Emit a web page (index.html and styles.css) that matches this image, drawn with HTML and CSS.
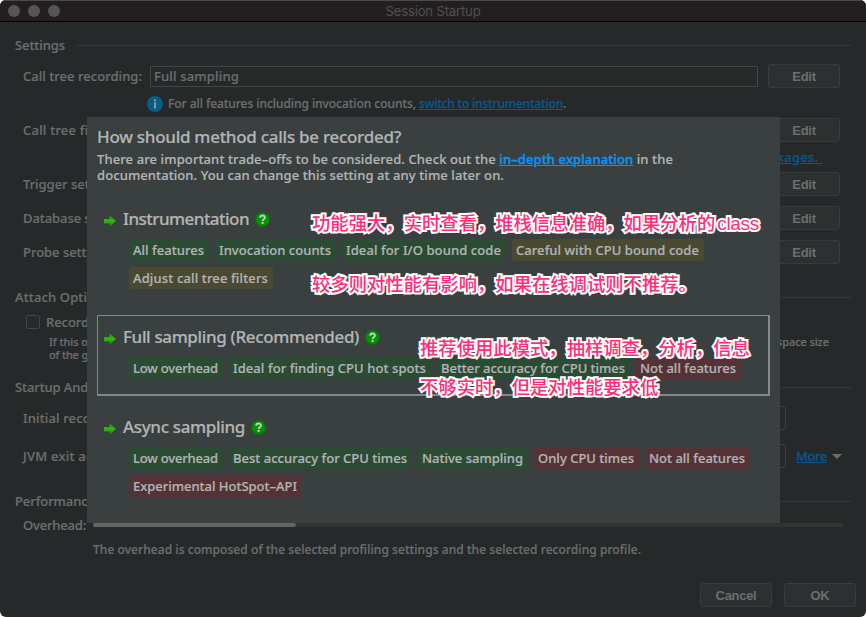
FILE: index.html
```
<!DOCTYPE html>
<html lang="en">
<head>
<meta charset="utf-8">
<title>Session Startup</title>
<link rel="stylesheet" href="styles.css">
</head>
<body>
<svg width="0" height="0" class="defs">
  <defs>
    <linearGradient id="ag" x1="0" y1="0" x2="0" y2="1"><stop offset="0" stop-color="#129312"/><stop offset=".5" stop-color="#38b80b"/><stop offset="1" stop-color="#0d850d"/></linearGradient>
    <symbol id="arrow" viewBox="0 0 12 12"><path d="M0 4h5.500V.3L12 6l-6.500 5.700V8.500H0z" fill="url(#ag)"/></symbol>
    <symbol id="help" viewBox="0 0 15 15"><circle cx="7.500" cy="7.500" r="7.300" fill="#087c08"/><circle cx="7.500" cy="7.500" r="6" fill="#079307"/><path d="M5.200 5.800c0-3.100 4.700-3 4.700-.4 0 1.800-2.300 1.700-2.300 3.500" fill="none" stroke="#c5cfc5" stroke-width="1.900"/><rect x="6.600" y="10" width="2" height="1.900" fill="#c5cfc5"/></symbol>
  </defs>
</svg>
<div class="window">
  <header class="titlebar"><i class="dot"></i><i class="dot"></i><i class="dot"></i><span class="title"><span data-w="95">Session Startup</span></span></header>
  <main class="content">
    <div class="row section first"><span data-w="50">Settings</span><hr></div>
    <div class="row field g7"><label data-w="119">Call tree recording:</label><div class="input"><span data-w="85">Full sampling</span></div><button>Edit</button></div>
    <div class="row info g3">
      <svg width="16" height="16" viewBox="0 0 16 16"><circle cx="8" cy="8" r="8" fill="#075e83"/><rect x="7" y="3.300" width="2" height="2" fill="#8a9599"/><rect x="7" y="6.300" width="2" height="6.200" fill="#8a9599"/></svg>
      <span><span data-w="251">For all features including invocation counts, </span><a data-w="144">switch to instrumentation</a>.</span>
    </div>
    <div class="row field g3"><label data-w="98">Call tree filters:</label><button>Edit</button></div>
    <div class="row packages g3"><a data-w="68">packages. </a></div>
    <div class="row field g3"><label data-w="101">Trigger settings:</label><button>Edit</button></div>
    <div class="row field g10"><label data-w="114">Database settings:</label><button>Edit</button></div>
    <div class="row field g10"><label data-w="93">Probe settings:</label><button>Edit</button></div>
    <div class="row section g21"><span data-w="95">Attach Options</span><hr></div>
    <div class="row check g1"><i class="box"></i><span data-w="111">Record on startup</span></div>
    <div class="hint"><span data-w="66">If this option</span><span class="end" data-w="52">space size</span><span data-w="75">of the garbage</span></div>
    <div class="row section g14"><span data-w="99">Startup And Exit</span><hr></div>
    <div class="row field g7"><label data-w="150">Initial recording profile:</label><div class="select"></div></div>
    <div class="row field g14"><label data-w="99">JVM exit action:</label><div class="select"></div><a class="more" data-w="31">More</a><i class="caret"></i></div>
    <div class="row section g21"><span data-w="80">Performance</span><hr></div>
    <div class="row overhead"><label data-w="63">Overhead:</label><div class="track"><div class="fill"></div></div></div>
    <div class="row desc g1"><span data-w="548">The overhead is composed of the selected profiling settings and the selected recording profile.</span></div>
    <footer class="actions"><button>Cancel</button><button>OK</button></footer>
  </main>

  <section class="dialog">
    <h1><span data-w="304">How should method calls be recorded?</span></h1>
    <p><span data-w="576">There are important trade–offs to be considered. Check out the <a>in–depth explanation</a> in the</span><br><span data-w="407">documentation. You can change this setting at any time later on.</span></p>
    <div class="option one">
      <h2><svg class="arrow"><use href="#arrow"/></svg><span data-w="126">Instrumentation</span><svg class="help"><use href="#help"/></svg></h2>
      <div class="tags"><b data-w="71">All features</b><b data-w="112">Invocation counts</b><b data-w="155">Ideal for I/O bound code</b><b class="warn" data-w="183">Careful with CPU bound code</b></div>
      <div class="tags"><b class="warn" data-w="135">Adjust call tree filters</b></div>
    </div>
    <div class="option selected">
      <h2><svg class="arrow"><use href="#arrow"/></svg><span data-w="236">Full sampling (Recommended)</span><svg class="help"><use href="#help"/></svg></h2>
      <div class="tags"><b data-w="85">Low overhead</b><b data-w="193">Ideal for finding CPU hot spots</b><b data-w="184">Better accuracy for CPU times</b><b class="bad" data-w="96">Not all features</b></div>
    </div>
    <div class="option three">
      <h2><svg class="arrow"><use href="#arrow"/></svg><span data-w="122">Async sampling</span><svg class="help"><use href="#help"/></svg></h2>
      <div class="tags"><b data-w="85">Low overhead</b><b data-w="174">Best accuracy for CPU times</b><b data-w="101">Native sampling</b><b class="bad" data-w="96">Only CPU times</b><b class="bad" data-w="96">Not all features</b></div>
      <div class="tags"><b class="bad" data-w="164">Experimental HotSpot–API</b></div>
    </div>
  </section>

  <div class="note n1" lang="zh-CN">功能强大，实时查看，堆栈信息准确，如果分析的<span class="latin">class</span></div>
  <div class="note n2" lang="zh-CN">较多则对性能有影响，如果在线调试则不推荐。</div>
  <div class="note n3" lang="zh-CN">推荐使用此模式，抽样调查，分析，信息</div>
  <div class="note n4" lang="zh-CN">不够实时，但是对性能要求低</div>
</div>
<script src="fit.js"></script>
</body>
</html>
```
FILE: styles.css
```
* { box-sizing: border-box; }
html, body { margin: 0; height: 617px; overflow: hidden; background: #fff; }
body { font: 500 13px/16px "Noto Sans", "Open Sans", sans-serif; color: #6c6e6e; -webkit-text-stroke: .2px currentColor; }
.defs { position: absolute; }
[data-w] { white-space: pre; }
.window { position: relative; width: 866px; height: 617px; background: #262929; border-radius: 6px; overflow: hidden; }
.titlebar { height: 22px; background: #231f20; border-top: 1px solid #4a4a4a; border-bottom: 1px solid #000; display: flex; align-items: center; gap: 8px; padding-left: 8px; }
.dot { width: 12px; height: 12px; border-radius: 50%; background: #555; }
.title { flex: 1; text-align: center; padding-right: 68px; font: 13px/16px Inter, sans-serif; color: #505050; -webkit-text-stroke: 0; }
.content { padding: 11px 26px 0 23px; display: flex; flex-direction: column; }
.row { height: 24px; flex: none; display: flex; align-items: center; }
.g1 { margin-top: 1px; } .g3 { margin-top: 3px; } .g7 { margin-top: 7px; } .g10 { margin-top: 10px; } .g14 { margin-top: 14px; } .g21 { margin-top: 21px; }
.section { margin-left: -8px; margin-right: -11px; gap: 11px; }
.section hr { flex: 1; height: 1px; border: 0; margin: 0; background: #343737; }
.input { width: 608px; height: 21px; margin-left: 8px; border: 1px solid #444646; padding-left: 3px; display: flex; align-items: center; flex: none; }
button { width: 72px; height: 24px; flex: none; padding: 1px 0 0; border: 1px solid #383b3b; border-radius: 3px; background: #2d3031; color: #6c6e6e; font: bold 13px/21px "Liberation Sans", sans-serif; -webkit-text-stroke: 0; letter-spacing: -.3px; }
.field button { margin-left: auto; }
.content a { color: #07588f; text-decoration: underline; }
.info { padding-left: 124px; padding-top: 1px; gap: 5px; font-size: 12px; }
.packages { justify-content: flex-end; padding-right: 18px; }
.check { padding-left: 3px; gap: 6px; }
.box { width: 14px; height: 14px; border: 1px solid #414444; border-radius: 2px; }
.hint { height: 27px; padding-left: 26px; padding-right: 11px; padding-top: 1px; font-size: 11px; line-height: 13px; display: grid; grid-template-columns: 1fr auto; }
.select { width: 400px; height: 24px; margin-left: auto; margin-right: 54px; border: 1px solid #3b3e3e; border-radius: 3px; flex: none; }
.more { margin-left: -44px; }
.caret { border: 5px solid transparent; border-top-color: #6c6e6e; border-bottom: 0; margin-left: 5px; margin-right: -2px; }
.overhead .track { margin-left: 7px; width: 750px; height: 4px; border-radius: 2px; background: #343434; flex: none; position: relative; z-index: 2; }
.fill { height: 4px; width: 203px; border-radius: 2px; background: #646464; }
.desc { padding-left: 70px; font-size: 12px; }
.actions { margin-top: 21px; margin-right: -16px; display: flex; justify-content: flex-end; gap: 12px; }

.dialog { position: absolute; left: 87px; top: 117px; width: 693px; height: 406px; padding: 10px 10px 0; background: #3a3f3f; color: #b2b4b4; }
h1, h2, p { margin: 0; }
h1 { font-size: 17px; line-height: 20px; font-weight: 500; }
p { margin-top: 4px; }
p a { color: #0a92f5; text-decoration: underline; -webkit-text-stroke: .5px #0a92f5; }
.option { padding: 0 7px; }
.one { margin-top: 24px; height: 82px; }
.selected { margin-top: 26px; height: 81px; padding: 9px 6px 0; border: 1px solid #858888; border-right-width: 2px; border-bottom-width: 2px; }
.three { margin-top: 19px; }
h2 { display: flex; align-items: center; height: 24px; font-size: 17px; line-height: 24px; font-weight: 500; }
.arrow { width: 12px; height: 12px; margin: 3px 7px 0 0; }
.help { width: 15px; height: 15px; margin-left: 6px; }
.tags { display: flex; gap: 6px; margin: 8px 0 0 25px; }
.tags + .tags { margin-top: 6px; }
.tags b { height: 22px; padding: 0 5px 0 4px; line-height: 22px; border-radius: 3px; background: #2b4b34; font-weight: 500; flex: none; }
.tags .warn { background: #4a4931; }
.tags .bad { background: #553236; }

.note { position: absolute; white-space: nowrap; font: 500 18.330px/26px "Noto Sans CJK SC", sans-serif; color: #ff2d75; -webkit-text-stroke: 4px #fff; paint-order: stroke fill; stroke-linejoin: round; }
.latin { font: 19px/20px "Liberation Sans", sans-serif; letter-spacing: -.3px; margin-left: 2px; }
.n1 { left: 312px; top: 209px; }
.n2 { left: 312px; top: 270px; }
.n3 { left: 420px; top: 334px; }
.n4 { left: 420px; top: 373px; }
```
FILE: fit.js
```
// Tracks each label so that its text fills the width given in data-w.
document.querySelectorAll('[data-w]').forEach(function (el) {
  var range = document.createRange();
  range.selectNodeContents(el);
  var gap = Number(el.dataset.w) - range.getBoundingClientRect().width;
  el.style.letterSpacing = gap / el.textContent.length + 'px';
});
```
